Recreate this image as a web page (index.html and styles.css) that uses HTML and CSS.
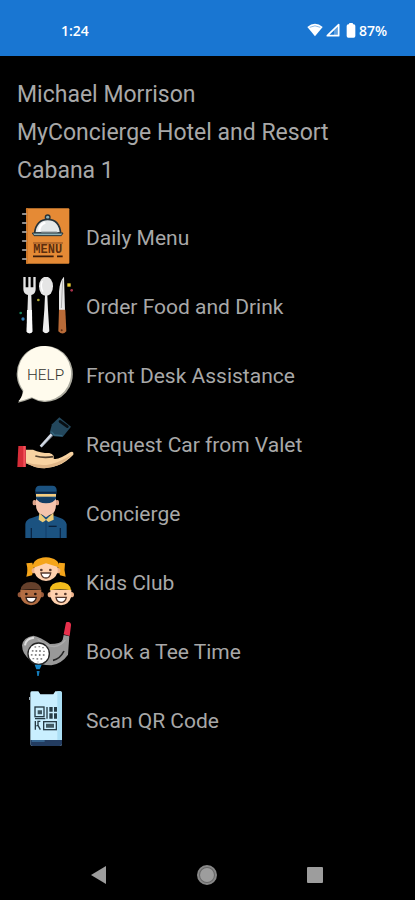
FILE: index.html
```
<!DOCTYPE html>
<html lang="en">
<head>
    <meta charset="UTF-8">
    <meta name="viewport" content="width=device-width, initial-scale=1.0">
    <title>MyConcierge</title>
    <link rel="stylesheet" href="styles.css">
</head>
<body>
    <header class="status-bar">
        <span>1:24</span>
        <div class="status-icons">
            <svg class="wifi" viewBox="0 0 48 42" aria-hidden="true">
                <path d="M1 12Q24-8 47 12L24 40Z" fill="#fff"/>
                <path d="M8 13Q24 4 40 13" fill="none" stroke="#8dbbe9" stroke-width="3"/>
            </svg>
            <svg class="signal" viewBox="0 0 42 42" aria-hidden="true">
                <path d="M4 38L38 5V38Z" fill="none" stroke="#fff" stroke-width="5" stroke-linejoin="round"/>
                <path d="M24 38V22L38 8V38Z" fill="#fff" opacity=".3"/>
            </svg>
            <svg class="battery" viewBox="0 0 30 45" aria-hidden="true">
                <rect x="9" y="0" width="12" height="8" rx="2" fill="#fff"/>
                <rect x="2" y="4" width="26" height="40" rx="5" fill="#fff"/>
            </svg>
            <span>87%</span>
        </div>
    </header>

    <main>
        <div class="guest-info">
            <p>Michael Morrison</p>
            <p>MyConcierge Hotel and Resort</p>
            <p>Cabana 1</p>
        </div>

        <nav class="menu">
            <a href="#menu" class="menu-item">
                <svg viewBox="18 24 174 174" aria-hidden="true">
                    <rect x="48" y="25" width="130" height="166" rx="3" fill="#e58a35"/>
                    <path d="M48 25H54V191H48Z" fill="#cf7829"/>
                    <path d="M38 42H48M38 69H48M38 96H48M38 123H48M38 150H48M38 177H48" stroke="#bbb" stroke-width="5" stroke-linecap="round"/>
                    <circle cx="113" cy="52" r="7" fill="#8fb2b7" stroke="#263238" stroke-width="4"/>
                    <path d="M74 99C76 72 92 58 113 58S149 72 152 99Z" fill="#e4e8e8" stroke="#263238" stroke-width="5"/>
                    <path d="M88 94Q88 73 106 68" fill="none" stroke="#fff" stroke-width="7"/>
                    <path d="M94 93H140L144 99H94Z" fill="#b8c0c2"/>
                    <path d="M67 99H159L154 107H72Z" fill="#8fb2b7" stroke="#263238" stroke-width="3"/>
                    <path d="M69 129H159" stroke="#8a4a20" stroke-width="3"/>
                    <text x="70" y="160" class="menu-label">MENU</text>
                    <path d="M69 169H131M141 169H158" stroke="#3a1c0c" stroke-width="5"/>
                </svg>
                <span>Daily Menu</span>
            </a>
            <a href="#order" class="menu-item">
                <svg viewBox="18 21 174 174" aria-hidden="true">
                    <path d="M40 21H47V52H55V21H62V52H70V21H77V57Q77 72 64 75L67 185Q59 195 50 185L54 75Q40 72 40 57Z" fill="#e5e5e5"/>
                    <path d="M51 120H66L67 185Q59 195 50 185Z" fill="#fafafa"/>
                    <ellipse cx="108" cy="49" rx="21" ry="29" fill="#e5e5e5"/>
                    <path d="M105 76H112L114 120L118 184Q108 196 98 184L103 120Z" fill="#ededed"/>
                    <path d="M97 33Q90 49 99 65" fill="none" stroke="#fff" stroke-width="4"/>
                    <path d="M162 20Q149 34 147 65V121H165Z" fill="#e8e8e8"/>
                    <path d="M158 31L154 114" stroke="#aaa" stroke-width="3"/>
                    <path d="M147 119H166L169 184Q158 197 145 184Z" fill="#b96b38"/>
                    <circle cx="155" cy="181" r="3" fill="#613015"/>
                    <rect x="172" y="40" width="10" height="10" fill="#e9cc35"/>
                    <circle cx="185" cy="61" r="4" fill="#a9324c"/>
                    <circle cx="85" cy="90" r="4" fill="#b2ab35"/>
                    <circle cx="32" cy="129" r="4" fill="#16845b"/>
                    <circle cx="39" cy="147" r="5" fill="#327eb3"/>
                </svg>
                <span>Order Food and Drink</span>
            </a>
            <a href="#assistance" class="menu-item">
                <svg viewBox="18 18 174 174" aria-hidden="true">
                    <path d="M108 18A82 84 0 1 1 66 175Q45 184 24 188Q37 172 38 154A83 84 0 0 1 108 18Z" fill="#aaa99e"/>
                    <path d="M106 18A80 82 0 1 1 65 172Q45 180 25 184Q40 168 40 151A81 83 0 0 1 106 18Z" fill="#fffbed"/>
                    <text x="51" y="119" class="help-label">HELP</text>
                </svg>
                <span>Front Desk Assistance</span>
            </a>
            <a href="#valet" class="menu-item">
                <svg viewBox="18 15 174 174" aria-hidden="true">
                    <path d="M126 72L92 110" stroke="#d2d9e4" stroke-width="8"/>
                    <path d="M130 76L96 110" stroke="#8d99a8" stroke-width="2"/>
                    <path d="M119 68L126 43L148 22L183 50L158 81L132 79Z" fill="#23475c"/>
                    <path d="M124 65L133 75L157 77" fill="none" stroke="#34657d" stroke-width="4"/>
                    <path d="M150 34L172 50" stroke="#080e12" stroke-width="8" stroke-linecap="round"/>
                    <path d="M25 108H47V171H22Z" fill="#d62d38"/>
                    <path d="M40 108H47V171H40Z" fill="#f4525b"/>
                    <path d="M48 119H69Q91 129 118 129Q135 134 131 146Q145 151 180 127Q192 122 190 134Q168 157 144 166Q112 180 75 171L48 160Z" fill="#f8d3a2"/>
                    <path d="M48 157Q76 167 110 165Q143 161 188 133Q167 155 144 166Q112 180 75 171L48 160Z" fill="#dfb688"/>
                    <path d="M76 138Q101 145 130 140" fill="none" stroke="#51402f" stroke-width="5"/>
                </svg>
                <span>Request Car from Valet</span>
            </a>
            <a href="#concierge" class="menu-item">
                <svg viewBox="18 12 174 174" aria-hidden="true">
                    <path d="M46 174V132Q48 118 65 114L88 106H128L151 114Q167 119 170 133V174Z" fill="#1b5280"/>
                    <path d="M64 174V144M151 174V144" stroke="#0a2544" stroke-width="4"/>
                    <path d="M88 98L108 119L130 98L131 119L116 126L108 121L98 127L86 119Z" fill="#edcc78"/>
                    <path d="M108 121V174" stroke="#123d68" stroke-width="3"/>
                    <path d="M116 139H140" stroke="#09203b" stroke-width="4"/>
                    <rect x="68" y="60" width="11" height="16" rx="5" fill="#dba187"/>
                    <rect x="136" y="60" width="11" height="16" rx="5" fill="#dba187"/>
                    <path d="M78 56H138V74Q137 102 118 105L108 112L98 105Q78 99 78 74Z" fill="#f5c4ad"/>
                    <path d="M76 31Q76 17 89 17H127Q140 17 140 31L137 58Q127 66 108 66Q89 66 79 58Z" fill="#1b5280"/>
                    <path d="M78 42H138V50H78Z" fill="#f5cc7f"/>
                    <path d="M78 35H138V41H78Z" fill="#0a2544"/>
                    <path d="M79 54Q108 48 137 54Q133 70 108 70Q84 70 79 54Z" fill="#123c63"/>
                </svg>
                <span>Concierge</span>
            </a>
            <a href="#kids" class="menu-item">
                <svg viewBox="18 9 174 174" aria-hidden="true">
                    <path d="M67 38L49 40Q55 61 49 80L66 76L72 57ZM147 38L165 40Q161 61 167 80L150 76L144 57Z" fill="#f5a51a"/>
                    <circle cx="73" cy="62" r="8" fill="#edb18b"/>
                    <circle cx="143" cy="62" r="8" fill="#edb18b"/>
                    <path d="M73 48Q108 28 143 48V66Q135 91 108 93Q81 91 73 66Z" fill="#ffd1ae"/>
                    <path d="M68 53Q68 24 108 22Q148 24 148 53L137 49L108 40L79 50Z" fill="#f5a51a"/>
                    <circle cx="94" cy="60" r="4" fill="#55382c"/>
                    <circle cx="121" cy="60" r="4" fill="#55382c"/>
                    <path d="M93 69H122Q120 84 108 84Q95 84 93 69Z" fill="#fff" stroke="#55382c" stroke-width="4"/>
                    <circle cx="31" cy="134" r="8" fill="#96583a"/>
                    <circle cx="94" cy="134" r="8" fill="#96583a"/>
                    <path d="M31 119H94V139Q88 164 63 166Q37 163 31 139Z" fill="#b26d43"/>
                    <path d="M32 120Q34 97 63 96Q92 97 94 120Q63 114 32 120Z" fill="#65402b"/>
                    <circle cx="49" cy="132" r="4" fill="#24150f"/>
                    <circle cx="76" cy="132" r="4" fill="#24150f"/>
                    <path d="M48 142H79Q76 157 63 157Q50 156 48 142Z" fill="#fff" stroke="#37231b" stroke-width="4"/>
                    <circle cx="121" cy="134" r="8" fill="#edb18b"/>
                    <circle cx="184" cy="134" r="8" fill="#edb18b"/>
                    <path d="M121 119H184V139Q178 164 153 166Q127 163 121 139Z" fill="#ffd1ae"/>
                    <path d="M119 121Q121 97 151 96Q181 97 183 121Q151 114 119 121Z" fill="#f4bd1c"/>
                    <circle cx="139" cy="132" r="4" fill="#55382c"/>
                    <circle cx="166" cy="132" r="4" fill="#55382c"/>
                    <path d="M138 142H169Q166 157 153 157Q140 156 138 142Z" fill="#fff" stroke="#55382c" stroke-width="4"/>
                </svg>
                <span>Kids Club</span>
            </a>
            <a href="#tee" class="menu-item">
                <svg viewBox="18 21 174 174" aria-hidden="true">
                    <path d="M173 20Q184 22 183 31L179 63L161 58L167 27Q168 20 173 20Z" fill="#e8304c"/>
                    <path d="M161 60L178 64L174 119Q155 146 124 151Q91 151 60 134Q37 119 36 91Q39 67 70 62Q92 66 120 87Q153 87 158 74Z" fill="#999"/>
                    <path d="M45 91Q48 70 72 68" fill="none" stroke="#ddd" stroke-width="6"/>
                    <path d="M83 73Q108 95 133 95Q154 91 166 75" fill="none" stroke="#adadad" stroke-width="4"/>
                    <path d="M129 136Q150 132 162 108" fill="none" stroke="#252525" stroke-width="5"/>
                    <circle cx="86" cy="116" r="34" fill="#222"/>
                    <circle cx="86" cy="116" r="30" fill="#fff"/>
                    <path d="M76 94V98M88 93V97M99 96V100M68 105V110M79 105V111M90 105V111M102 107V111M65 117V122M77 117V123M89 117V123M101 117V123M70 129V133M82 129V134M94 129V134M84 140V142" stroke="#888" stroke-width="5"/>
                    <path d="M74 149H95L89 163H79Z" fill="#1688cb"/>
                    <path d="M80 168H89L86 183H82Z" fill="#147cbb"/>
                </svg>
                <span>Book a Tee Time</span>
            </a>
            <a href="#scan" class="menu-item">
                <svg viewBox="18 21 174 174" aria-hidden="true">
                    <path d="M65 22H85L91 31H130L136 22H151Q156 22 156 29V180Q156 186 149 186H68Q61 186 61 179V28Q61 22 65 22Z" fill="#c9efff"/>
                    <path d="M142 22H151Q156 22 156 29V170H142Z" fill="#abdff5"/>
                    <path d="M61 168H156V180Q156 186 149 186H68Q61 186 61 179Z" fill="#233c60"/>
                    <path d="M65 171H104" stroke="#3f77a6" stroke-width="4"/>
                    <rect x="57" y="39" width="4" height="9" fill="#9babb5"/>
                    <g fill="none" stroke="#263b45" stroke-width="4">
                        <rect x="75" y="69" width="27" height="29"/>
                        <path d="M111 69V104M75 104H106M76 111V137M91 112H84V124L79 126M84 124L91 137"/>
                        <rect x="101" y="113" width="38" height="24"/>
                    </g>
                    <path d="M118 69H128V83H118ZM132 69H141V83H132ZM118 88H128V104H118ZM132 88H141V104H132Z" fill="#263b45"/>
                    <path d="M83 79H96V91H83ZM108 119H132V131H108Z" fill="#405861"/>
                </svg>
                <span>Scan QR Code</span>
            </a>
        </nav>
    </main>

    <footer class="nav-bar">
        <button type="button" aria-label="Back">
            <svg viewBox="0 0 20 20"><path d="M1 10L16 1V19Z" fill="#9d9d9d"/></svg>
        </button>
        <button type="button" aria-label="Home">
            <svg viewBox="0 0 20 20">
                <circle cx="10" cy="10" r="9" fill="#666" stroke="#888" stroke-width="2"/>
                <circle cx="10" cy="10" r="7" fill="#9d9d9d"/>
            </svg>
        </button>
        <button type="button" aria-label="Recent apps">
            <svg viewBox="0 0 20 20"><rect x="2" y="2" width="16" height="16" rx="1" fill="#9d9d9d"/></svg>
        </button>
    </footer>
</body>
</html>
```
FILE: styles.css
```
* {
    margin: 0;
    padding: 0;
    box-sizing: border-box;
}

body {
    font-family: Roboto, sans-serif;
    background: #000;
    color: #a8a8a8;
    min-height: 100vh;
    display: flex;
    flex-direction: column;
}

.status-bar {
    display: flex;
    align-items: center;
    justify-content: space-between;
    height: 56px;
    padding: 4px 28px 0 61px;
    background: #1976d2;
    color: #fff;
    font-family: "Open Sans", sans-serif;
    font-size: 14px;
    font-weight: 600;
}

.status-icons {
    display: flex;
    align-items: center;
    gap: 3px;
}

.wifi {
    width: 16px;
    height: 14px;
}

.signal {
    width: 14px;
    height: 14px;
}

.battery {
    width: 10px;
    height: 15px;
    margin-left: 3px;
}

main {
    flex: 1;
    padding: 20px 16px;
}

.guest-info {
    margin-bottom: 12px;
    padding-left: 1px;
    font-size: 23px;
    line-height: 38px;
}

.menu-item {
    display: flex;
    align-items: center;
    gap: 12px;
    height: 69px;
    color: inherit;
    font-size: 21px;
    text-decoration: none;
}

.menu-item span {
    padding-top: 2px;
}

.menu-item svg {
    width: 58px;
    height: 58px;
    flex-shrink: 0;
}

.menu-label {
    font-family: "Liberation Mono", monospace;
    font-size: 36px;
    font-weight: bold;
    fill: #5c2e0e;
}

.help-label {
    font-family: Roboto, sans-serif;
    font-size: 46px;
    font-weight: 300;
    fill: #33332f;
}

.nav-bar {
    display: flex;
    justify-content: space-around;
    align-items: center;
    height: 50px;
    padding: 0 46px;
}

.nav-bar button {
    width: 20px;
    height: 20px;
    background: none;
    border: none;
    cursor: pointer;
}

.nav-bar svg {
    display: block;
    width: 20px;
    height: 20px;
}
```
